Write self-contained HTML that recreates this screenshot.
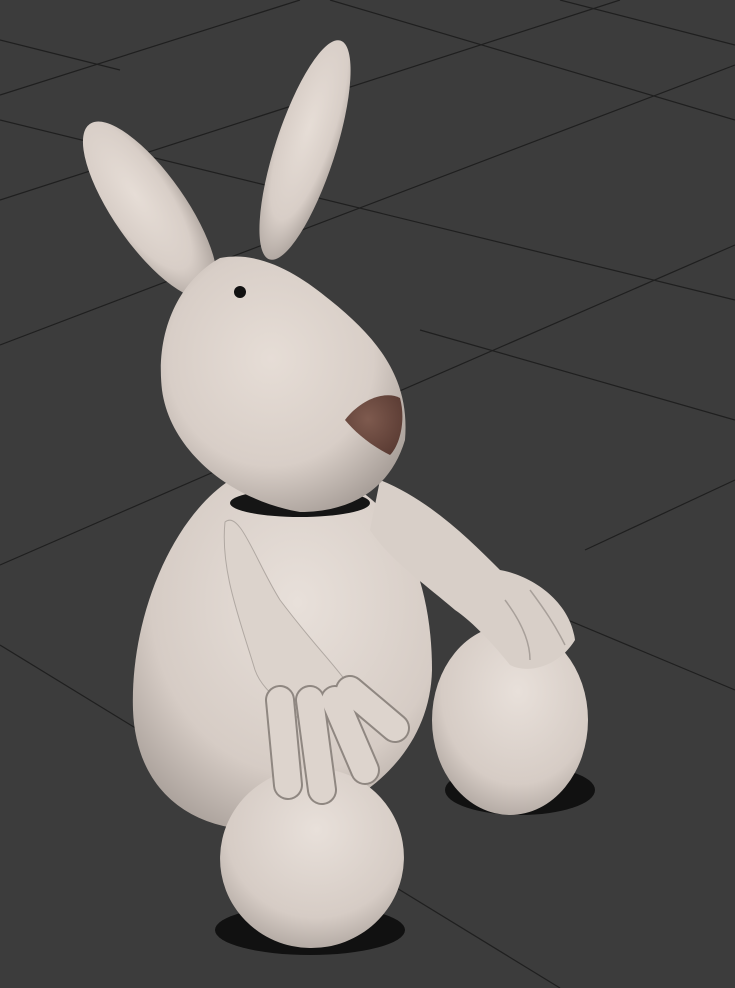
<!DOCTYPE html>
<html><head><meta charset="utf-8"><style>
html,body{margin:0;padding:0;background:#3b3b3b;overflow:hidden}
svg{display:block}
</style></head><body>
<svg width="735" height="988" viewBox="0 0 735 988" xmlns="http://www.w3.org/2000/svg">
<defs>
<radialGradient id="fur" cx="0.45" cy="0.4" r="0.7">
<stop offset="0" stop-color="#e6ddd6"/><stop offset="0.6" stop-color="#d8cec7"/><stop offset="1" stop-color="#9f9690"/>
</radialGradient>
<radialGradient id="fur2" cx="0.55" cy="0.35" r="0.75">
<stop offset="0" stop-color="#e8e0da"/><stop offset="0.65" stop-color="#d6ccc5"/><stop offset="1" stop-color="#a39a94"/>
</radialGradient>
<radialGradient id="nose" cx="0.4" cy="0.4" r="0.7">
<stop offset="0" stop-color="#7e5a4e"/><stop offset="1" stop-color="#5a3b33"/>
</radialGradient>
</defs>
<rect width="735" height="988" fill="#3c3c3c"/>
<g stroke="#1f1f1f" stroke-width="1.2" fill="none">
<line x1="0" y1="95" x2="300" y2="0"/>
<line x1="0" y1="200" x2="620" y2="0"/>
<line x1="0" y1="345" x2="735" y2="65"/>
<line x1="0" y1="565" x2="735" y2="245"/>
<line x1="0" y1="40" x2="120" y2="70"/>
<line x1="0" y1="120" x2="735" y2="300"/>
<line x1="0" y1="645" x2="560" y2="988"/>
<line x1="330" y1="0" x2="735" y2="120"/>
<line x1="560" y1="0" x2="735" y2="45"/>
<line x1="420" y1="330" x2="735" y2="420"/>
<line x1="520" y1="600" x2="735" y2="690"/>
<line x1="585" y1="550" x2="735" y2="480"/>
</g>
<ellipse cx="520" cy="790" rx="75" ry="25" fill="#111"/>
<ellipse cx="310" cy="930" rx="95" ry="25" fill="#111"/>
<ellipse cx="150" cy="210" rx="36" ry="105" transform="rotate(-35 150 210)" fill="url(#fur)"/>
<ellipse cx="305" cy="150" rx="30" ry="115" transform="rotate(18 305 150)" fill="url(#fur)"/>
<ellipse cx="510" cy="720" rx="78" ry="95" fill="url(#fur2)"/>
<path d="M230 480 C170 520 130 620 133 710 C136 790 190 830 260 830 C350 820 430 760 432 670 C432 580 400 510 350 485 Z" fill="url(#fur2)"/>
<path d="M380 480 C430 500 470 540 500 570 C530 575 570 600 575 640 C560 665 530 675 510 665 C490 640 470 620 455 610 C420 580 390 560 370 530 Z" fill="#d8cfc8"/>
<g stroke="#a8a09a" stroke-width="1.5" fill="none">
<path d="M505 600 C520 620 530 640 530 660"/>
<path d="M530 590 C545 610 555 625 565 645"/>
</g>
<ellipse cx="300" cy="503" rx="70" ry="14" fill="#151515"/>
<path d="M220 258 C180 280 155 330 162 390 C170 450 230 500 300 512 C350 512 390 490 405 440 C410 380 380 340 330 300 C300 275 260 250 220 258 Z" fill="url(#fur)"/>
<path d="M345 420 C360 400 385 390 400 398 C406 420 400 445 390 455 C370 445 355 432 345 420 Z" fill="url(#nose)"/>
<circle cx="240" cy="292" r="6" fill="#111"/>
<path d="M225 522 C240 510 255 560 280 600 C310 640 330 660 345 680 L300 720 C280 700 262 690 255 670 C240 620 220 570 225 522 Z" fill="#dcd3cc" stroke="#b0a8a2" stroke-width="1"/>
<ellipse cx="312" cy="858" rx="92" ry="90" transform="rotate(-10 312 858)" fill="url(#fur2)"/>
<g stroke-linecap="round" fill="none">
<g stroke="#8f8781" stroke-width="30">
<path d="M280 700 L288 785"/><path d="M310 700 L322 790"/><path d="M335 700 L365 770"/><path d="M350 690 L395 728"/>
</g>
<g stroke="#ddd4cd" stroke-width="26">
<path d="M280 700 L288 785"/><path d="M310 700 L322 790"/><path d="M335 700 L365 770"/><path d="M350 690 L395 728"/>
</g>
</g>
</svg>
</body></html>
